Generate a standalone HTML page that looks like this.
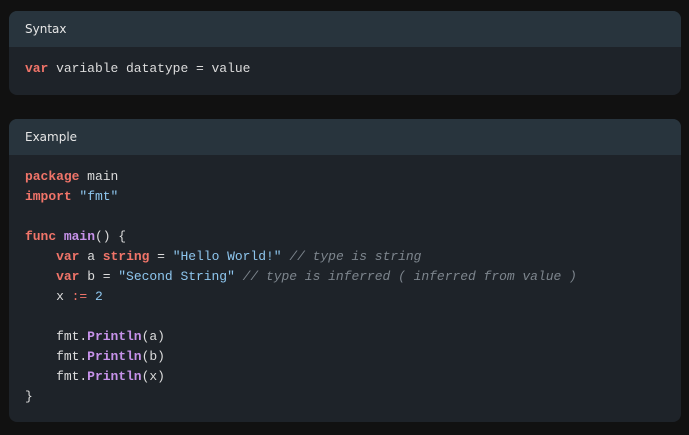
<!DOCTYPE html><html><head><style>
body{margin:0;background:#111;width:689px;height:435px;overflow:hidden}
.b{position:absolute;left:9px;width:672px;background:#1e2329;border-radius:8px;overflow:hidden}
.h{height:36px;background:#28343d;color:#e6e6e6;font:12px "DejaVu Sans",sans-serif;line-height:36px;padding-left:16px}
pre{margin:0;padding:0 0 0 16px;font:13px/20px "Liberation Mono",monospace;letter-spacing:-0.03px;color:#dcdcdc}
.k{color:#f07469;font-weight:bold}.s{color:#8ec6ee}.f{color:#c792ea;font-weight:bold}.c{color:#7d858d;font-style:italic}.n{color:#8ec6ee}.o{color:#f07469}
</style></head><body>
<div class="b" style="top:11px;height:84px"><div class="h">Syntax</div><pre style="padding-top:12px"><span class="k">var</span> variable datatype = value</pre></div>
<div class="b" style="top:119px;height:303px"><div class="h">Example</div><pre style="padding-top:12px"><span class="k">package</span> main
<span class="k">import</span> <span class="s">"fmt"</span>

<span class="k">func</span> <span class="f">main</span>() {
    <span class="k">var</span> a <span class="k">string</span> = <span class="s">"Hello World!"</span> <span class="c">// type is string</span>
    <span class="k">var</span> b = <span class="s">"Second String"</span> <span class="c">// type is inferred ( inferred from value )</span>
    x <span class="o">:=</span> <span class="n">2</span>

    fmt.<span class="f">Println</span>(a)
    fmt.<span class="f">Println</span>(b)
    fmt.<span class="f">Println</span>(x)
}</pre></div>
</body></html>
